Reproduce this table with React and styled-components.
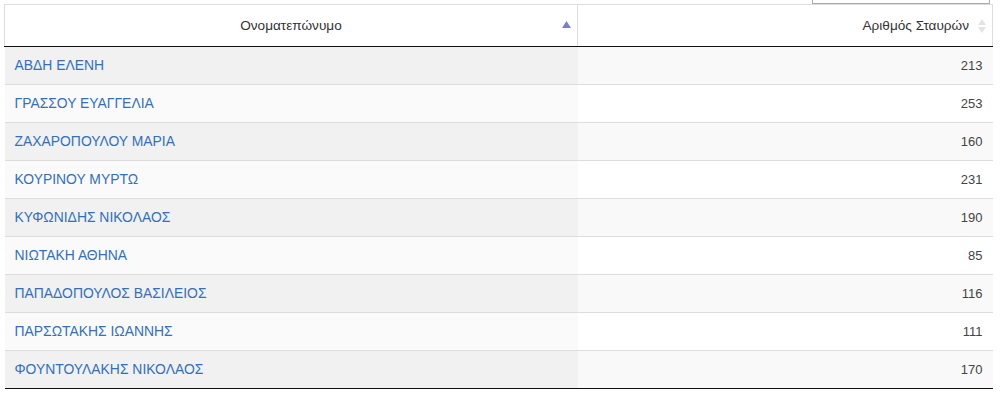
import styled, { createGlobalStyle } from 'styled-components'

const GlobalStyle = createGlobalStyle`
body {
  margin: 0;
  background: #fff;
  font-family: "Liberation Sans", Arial, sans-serif;
  font-size: 13px;
  color: #333;
}
`

const Wrapper = styled.div`
padding: 0 11px 0 4px;
`

const Toolbar = styled.div`
height: 4px;
overflow: hidden;
display: flex;
justify-content: flex-end;
align-items: flex-end;
padding-right: 3px;
`

const SearchInput = styled.input`
width: 178px;
height: 24px;
box-sizing: border-box;
border: 1px solid #aaa;
margin: 0;
`

const Table = styled.table`
width: 989px;
border-collapse: collapse;
table-layout: fixed;
`

const Th = styled.th`
position: relative;
height: 41px;
box-sizing: border-box;
padding: 10px ${p => (p.$align === 'right' ? '23px' : '10px')} 10px 10px;
line-height: 21px;
font-size: 13.6px;
font-weight: normal;
text-align: ${p => p.$align || 'center'};
border-top: 1px solid #ddd;
border-left: 1px solid #ddd;
border-right: 1px solid #ddd;
border-bottom: 1px solid #111;
color: #333;
`

const SortIcon = styled.svg`
position: absolute;
right: ${p => p.$right}px;
top: ${p => p.$top}px;
`

const Td = styled.td`
padding: 8px 10px;
line-height: 21px;
height: 37px;
box-sizing: border-box;
border-bottom: 1px solid ${p => (p.$last ? '#111' : '#ddd')};
text-align: ${p => p.$align || 'left'};
background: ${p => p.$bg};
color: #444;
`

const NameLink = styled.a`
color: #3470b8;
font-size: 13.9px;
text-decoration: none;
`

const rows = [
  ['ΑΒΔΗ ΕΛΕΝΗ', 213],
  ['ΓΡΑΣΣΟΥ ΕΥΑΓΓΕΛΙΑ', 253],
  ['ΖΑΧΑΡΟΠΟΥΛΟΥ ΜΑΡΙΑ', 160],
  ['ΚΟΥΡΙΝΟΥ ΜΥΡΤΩ', 231],
  ['ΚΥΦΩΝΙΔΗΣ ΝΙΚΟΛΑΟΣ', 190],
  ['ΝΙΩΤΑΚΗ ΑΘΗΝΑ', 85],
  ['ΠΑΠΑΔΟΠΟΥΛΟΣ ΒΑΣΙΛΕΙΟΣ', 116],
  ['ΠΑΡΣΩΤΑΚΗΣ ΙΩΑΝΝΗΣ', 111],
  ['ΦΟΥΝΤΟΥΛΑΚΗΣ ΝΙΚΟΛΑΟΣ', 170]
]

const App = () => {
  return (
    <Wrapper>
      <GlobalStyle />
      <Toolbar>
        <SearchInput type='search' />
      </Toolbar>
      <Table>
        <colgroup>
          <col style={{ width: 573 }} />
          <col />
        </colgroup>
        <thead>
          <tr>
            <Th>
              Ονοματεπώνυμο
              <SortIcon $right={6} $top={16} width='9' height='7' viewBox='0 0 9 7'>
                <polygon points='4.5,0 9,7 0,7' fill='#7a80c6' />
              </SortIcon>
            </Th>
            <Th $align='right'>
              Αριθμός Σταυρών
              <SortIcon $right={6} $top={14} width='8' height='14' viewBox='0 0 8 14'>
                <polygon points='4,0 8,6 0,6' fill='#e3e3e8' />
                <polygon points='0,8 8,8 4,14' fill='#e3e3e8' />
              </SortIcon>
            </Th>
          </tr>
        </thead>
        <tbody>
          {rows.map(([name, votes], i) => {
            const odd = i % 2 === 0
            const last = i === rows.length - 1
            return (
              <tr key={name}>
                <Td $bg={odd ? '#f1f1f1' : '#fafafa'} $last={last}>
                  <NameLink href='#'>{name}</NameLink>
                </Td>
                <Td $align='right' $bg={odd ? '#f9f9f9' : '#fff'} $last={last}>
                  {votes}
                </Td>
              </tr>
            )
          })}
        </tbody>
      </Table>
    </Wrapper>
  )
}

export default App
